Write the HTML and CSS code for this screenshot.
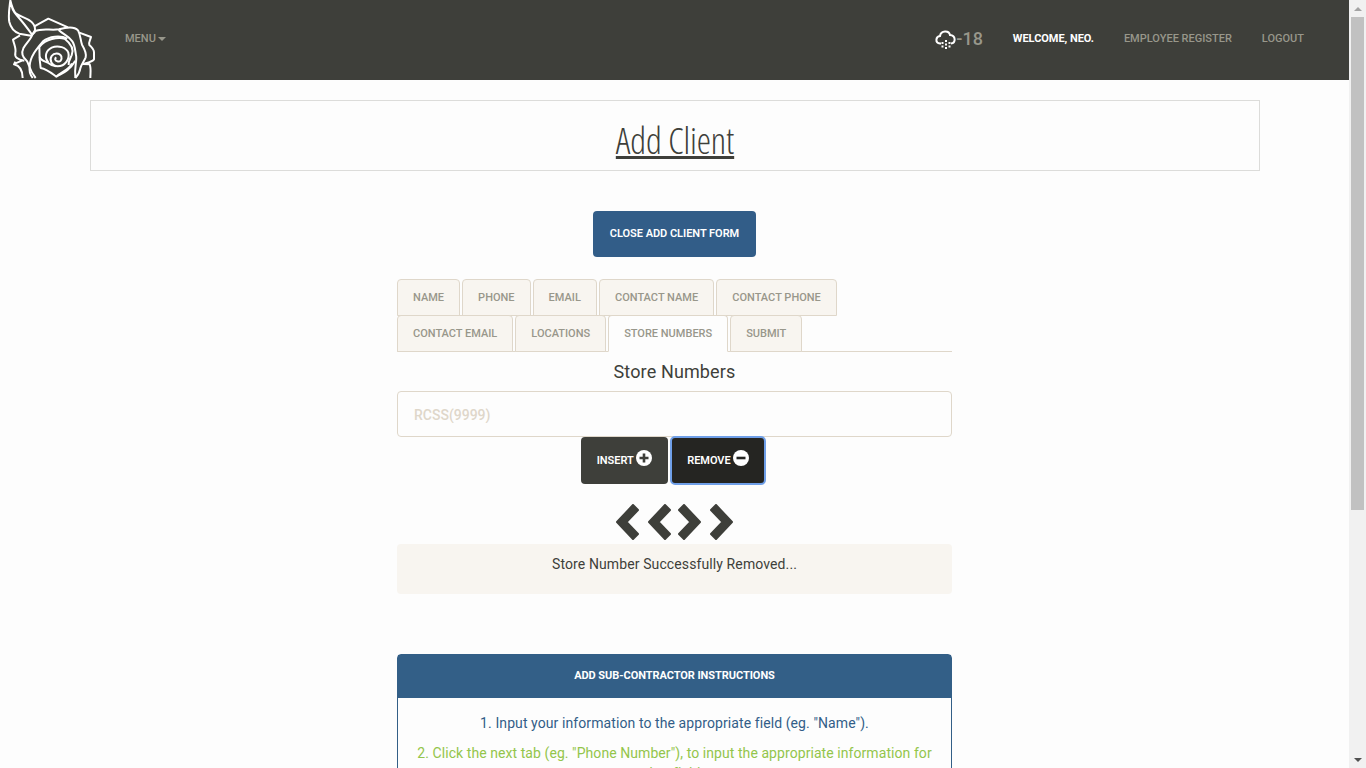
FILE: index.html
```html
<!DOCTYPE html>
<html lang="en">
<head>
<meta charset="utf-8">
<title>Add Client</title>
<link rel="stylesheet" href="styles.css">
</head>
<body>
<div class="page">
  <nav class="navbar">
    <svg class="logo" viewBox="0 0 300 240" fill="none" stroke="#fff" stroke-width="6" stroke-linejoin="round" stroke-linecap="butt">
      <path d="M31 1C28 25 24 45 28 66C32 83 42 95 58 101L93 107L104 97C107 85 104 74 94 65C78 52 60 50 47 40C38 30 34 14 31 1C34 25 42 38 52 48C70 68 82 84 97 105"/>
      <path d="M103 79L145 56L204 82"/>
      <path d="M60 106L39 119C44 139 49 147 46 158C43 172 53 179 73 182M46 185L42 193C58 197 68 212 68 234M46 190L68 181"/>
      <path d="M104 92L98 102C93 118 78 130 70 145C63 160 68 172 80 182C87 190 86 208 107 234"/>
      <path d="M104 94C128 83 150 92 177 88C205 80 226 82 234 91C242 105 241 120 246 134C255 149 260 160 257 172C252 185 244 192 241 205C239 217 234 226 226 234"/>
      <path d="M176 90C190 104 206 108 217 124C225 136 225 150 228 166C232 182 222 200 226 234"/>
      <path d="M238 98L273 111C271 120 265 126 268 135C276 142 282 148 282 157V178C276 186 262 188 249 192L269 193C274 206 271 220 271 234"/>
      <path d="M202 116C181 105 147 109 129 124C111 145 90 170 89 198C87 211 91 225 98 234M118 140L119 178L122 204C140 207 153 218 169 230C184 214 208 210 216 190"/>
      <path d="M119 170C122 183 135 183 145 189C151 194 159 199 168 199"/>
      <path d="M119 140C137 116 174 111 194 116C212 130 223 148 215 166C209 178 205 184 206 195"/>
      <path d="M169 230C185 220 204 218 226 182"/>
      <path d="M145 187C132 171 137 152 155 143C175 134 199 143 205 158C210 177 195 199 173 199C155 198 147 180 155 168C162 158 179 158 184 169C187 180 180 187 172 184C164 182 164 175 169 172"/>
    </svg>
    <a class="menu">Menu <span class="caret"></span></a>
    <div class="nav-right">
      <span class="weather"><svg viewBox="0 0 21 20" fill="none" stroke="#fff"><path stroke-width="2" d="M6 13.500H5C-.2 13 .6 6.500 5 6C6 .2 14 .2 15 5C21 5.500 21 13 16 13.500"/><path stroke-width="2" stroke-dasharray="2 1.500" d="M7.500 12v6M11 10v9M14.500 12v6"/></svg>-18</span>
      <a class="welcome">Welcome, Neo.</a><a>Employee Register</a><a>Logout</a>
    </div>
  </nav>
  <header class="title"><h1>Add Client</h1></header>
  <main class="form">
    <button class="btn primary">Close Add Client Form</button>
    <ul class="tabs">
      <li>Name</li><li>Phone</li><li>Email</li><li>Contact Name</li><li>Contact Phone</li><li>Contact Email</li><li>Locations</li><li class="active">Store Numbers</li><li>Submit</li>
    </ul>
    <h4>Store Numbers</h4>
    <input class="field" placeholder="RCSS(9999)">
    <div class="actions">
      <button class="btn">Insert <svg class="sign" viewBox="0 0 16 16"><circle cx="8" cy="8" r="8" fill="#fff"/><path d="M8 3.500v9M3.500 8h9" stroke="#3e3f3a" stroke-width="2.600"/></svg></button>
      <button class="btn pressed">Remove <svg class="sign" viewBox="0 0 16 16"><circle cx="8" cy="8" r="8" fill="#fff"/><path d="M3.500 8h9" stroke="#252522" stroke-width="2.600"/></svg></button>
    </div>
    <div class="arrows">
      <svg viewBox="0 0 23 36"><path d="M17 1L22 6L10.500 18L22 30L17 35L1 18Z"/></svg>
      <svg viewBox="0 0 23 36"><path d="M17 1L22 6L10.500 18L22 30L17 35L1 18Z"/></svg>
      <svg class="next" viewBox="0 0 23 36"><path d="M6 1L1 6L12.500 18L1 30L6 35L22 18Z"/></svg>
      <svg viewBox="0 0 23 36"><path d="M6 1L1 6L12.500 18L1 30L6 35L22 18Z"/></svg>
    </div>
    <div class="well">Store Number Successfully Removed...</div>
    <section class="panel">
      <h3>Add Sub-Contractor Instructions</h3>
      <p>1. Input your information to the appropriate field (eg. "Name").</p>
      <p class="green">2. Click the next tab (eg. "Phone Number"), to input the appropriate information for that field.</p>
    </section>
  </main>
</div>
<div class="scrollbar"><i class="up"></i><div class="thumb"></div><i class="down"></i></div>
</body>
</html>
```
FILE: styles.css
```css
* { box-sizing: border-box; }
body { margin: 0; height: 768px; overflow: hidden; display: flex; background: #fdfdfd; color: #3e3f3a; font: 14px/20px Roboto, sans-serif; }
.page { width: 1349px; height: 768px; overflow: hidden; }
.navbar { height: 80px; background: #3e3f3a; display: flex; font-size: 11px; font-weight: 500; line-height: 20px; text-transform: uppercase; color: #98978b; }
.logo { width: 100px; height: 80px; }
.menu { padding: 29px 0 0 25px; }
.caret { display: inline-block; border: 4px solid transparent; border-top-color: #98978b; border-bottom: 0; vertical-align: middle; margin-left: -1px; }
.nav-right { margin-left: auto; padding: 29px 45px 0 0; display: flex; gap: 30px; }
.welcome { color: #fff; font-weight: 700; letter-spacing: -.04px; }
.weather { display: flex; font-size: 18px; font-weight: 500; line-height: 20px; }
.weather svg { width: 21px; height: 20px; margin-top: 1px; }
.title { width: 1170px; height: 71px; margin: 20px 0 0 90px; border: 1px solid #dcdcda; text-align: center; }
.title h1 { margin: 20px 0 0; font: 300 36px/40px "Open Sans", sans-serif; font-stretch: 75%; letter-spacing: -.1px; text-decoration: underline; text-decoration-thickness: 3px; }
.form { width: 555px; margin: 40px 0 0 397px; display: flex; flex-direction: column; align-items: center; }
.btn { height: 47px; padding: 0 15px; border: 1px solid transparent; border-radius: 4px; background: #3e3f3a; color: #fff; font: 600 11px/20px Roboto, sans-serif; letter-spacing: -.03px; text-transform: uppercase; white-space: nowrap; }
.primary { background: #325d88; height: 46px; width: 163px; padding: 0; }
.tabs { width: 555px; margin: 22px 0 0; padding: 0; list-style: none; display: flex; flex-wrap: wrap; border-bottom: 1px solid #dfd7ca; }
.tabs li { height: 37px; margin: 0 2px -1px 0; padding: 8px 15px 6px; border: 1px solid #dfd7ca; border-radius: 4px 4px 0 0; background: #f8f5f0; color: #98978b; font-size: 11px; font-weight: 500; line-height: 20px; letter-spacing: .015px; text-transform: uppercase; }
.tabs li:nth-child(5) { margin-right: 100px; }
.tabs li:nth-child(n+6) { letter-spacing: 0; }
.tabs .active { background: #fdfdfd; border-bottom-color: #fdfdfd; }
h4 { margin: 10px 0 9px; font-size: 18px; font-weight: 400; line-height: 20px; letter-spacing: .13px; }
.field { width: 555px; height: 46px; padding: 2px 16px 0; border: 1px solid #dfd7ca; border-radius: 4px; background: #fdfdfd; font: 500 14px Roboto, sans-serif; }
.field::placeholder { color: #dfd7ca; opacity: 1; }
.actions { display: flex; gap: 3px; margin-left: -3px; }
.pressed { background: #252522; outline: 2px solid #6f9fe8; outline-offset: -1px; }
.sign { width: 16px; height: 16px; vertical-align: -2px; }
.arrows { display: flex; gap: 9px; margin-top: 20px; }
.arrows svg { width: 23px; height: 36px; fill: #3e3f3a; stroke: #3e3f3a; stroke-width: 2; stroke-linejoin: round; }
.arrows .next { margin-left: -2px; }
.well { width: 555px; height: 50px; margin-top: 4px; padding-top: 10px; border-radius: 4px; background: #f8f5f0; text-align: center; letter-spacing: .11px; }
.panel { width: 555px; height: 180px; margin-top: 60px; border: 1px solid #335f87; border-radius: 4px; text-align: center; color: #325d88; letter-spacing: .09px; }
.panel h3 { height: 43px; margin: 0 0 15px; background: #335f87; color: #fff; font-size: 11px; font-weight: 700; line-height: 41px; letter-spacing: -.06px; text-transform: uppercase; }
.panel p { margin: 0 15px 10px; }
.panel .green { color: #93c54b; letter-spacing: .07px; }
.scrollbar { width: 17px; height: 768px; background: #f1f1f1; display: flex; flex-direction: column; align-items: center; }
.up { margin: 7px 0 6px; border: 4px solid transparent; border-top: 0; border-bottom-color: #a3a3a3; }
.thumb { width: 13px; height: 493px; background: #c1c1c1; }
.down { margin: auto 0 6px; border: 4px solid transparent; border-bottom: 0; border-top-color: #505050; }
```
